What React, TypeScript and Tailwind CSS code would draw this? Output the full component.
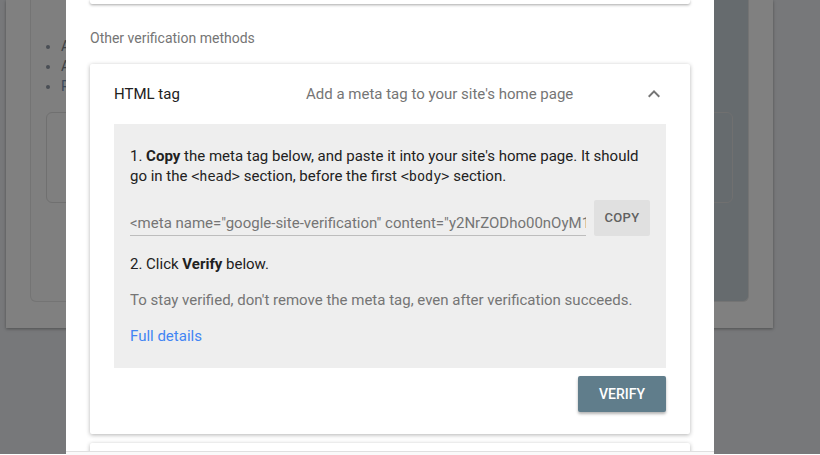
import React from 'react'

function ChevronUp() {
  return (
    <svg width="24" height="24" viewBox="0 0 24 24" className="text-[#757575]">
      <path d="M7.41 15.41 12 10.83l4.59 4.58L18 14l-6-6-6 6z" fill="currentColor" />
    </svg>
  )
}

function BackgroundPage() {
  return (
    <div className="h-full bg-[#77787a] pt-px -mt-px">
      <div className="ml-[6px] w-[767px] h-[328px] bg-[#808080] shadow-[0_1px_3px_rgba(0,0,0,0.35)] px-[24px] flow-root">
        <div className="h-[302px] rounded-b-[6px] border border-t-0 border-[#747474] bg-[linear-gradient(to_right,#7f7f7f_50%,#666b6e_50%)] pt-[36px] px-[15px]">
          <ul className="list-disc pl-[15px] text-[14px] leading-[20px] text-[#3e4246] marker:text-[#4a4f55]">
            <li>Add</li>
            <li>Add</li>
            <li className="text-[#3c4a5c]">Re</li>
          </ul>
          <div className="mt-[16px] h-[91px] rounded-[6px] border border-[#707070]" />
        </div>
      </div>
    </div>
  )
}

export default function App() {
  return (
    <div className="relative w-[820px] h-[455px] overflow-hidden font-['Roboto',sans-serif]">
      <BackgroundPage />

      {/* dialog */}
      <div className="absolute left-[66px] top-0 w-[648px] h-[455px] bg-white">
        <div className="px-[24px]">
          <div className="h-[4px] bg-white rounded-b-[2px] shadow-[0_1px_3px_rgba(0,0,0,0.35)]" />

          <div className="mt-[26px] text-[14px] leading-[16px] text-[#757575]">Other verification methods</div>

          <div className="mt-[18px] h-[370px] bg-white rounded-[2px] shadow-[0_1px_4px_rgba(0,0,0,0.3)] px-[24px]">
            <div className="flex items-center h-[60px]">
              <div className="w-[192px] text-[15px] text-[#212121]">HTML tag</div>
              <div className="flex-1 text-[15px] text-[#757575]">Add a meta tag to your site's home page</div>
              <div className="mr-[-12px] w-[48px] flex justify-center">
                <ChevronUp />
              </div>
            </div>

            <div className="bg-[#eeeeee] h-[244px] px-[16px] pt-[22px]">
              <p className="text-[15px] leading-[20px] text-[#212121]">
                1. <b className="font-bold">Copy</b> the meta tag below, and paste it into your site's home page. It should go in the{' '}
                <code className="font-['DejaVu_Sans_Mono',monospace] text-[13.5px]">&lt;head&gt;</code> section, before the first{' '}
                <code className="font-['DejaVu_Sans_Mono',monospace] text-[13.5px]">&lt;body&gt;</code> section.
              </p>

              <div className="mt-[14px] flex items-start">
                <div className="w-[456px] mt-[13px] border-b border-[#bdbdbd] pb-[2px] overflow-hidden whitespace-nowrap text-[15px] leading-[20px] text-[#757575]">
                  &lt;meta name="google-site-verification" content="y2NrZODho00nOyM1" /&gt;
                </div>
                <button className="ml-[8px] w-[56px] h-[36px] rounded-[2px] bg-[#e0e0e0] text-[13px] font-medium tracking-[0.3px] text-[#616161]">
                  COPY
                </button>
              </div>

              <p className="mt-[18px] text-[15px] leading-[20px] text-[#212121]">
                2. Click <b className="font-bold">Verify</b> below.
              </p>
              <p className="mt-[16px] text-[15px] leading-[20px] text-[#757575]">
                To stay verified, don't remove the meta tag, even after verification succeeds.
              </p>
              <a className="block mt-[16px] text-[15px] leading-[20px] text-[#4285f4]" href="#">
                Full details
              </a>
            </div>

            <div className="flex justify-end pt-[8px]">
              <button className="w-[88px] h-[36px] rounded-[2px] bg-[#607d8b] text-white text-[14px] font-medium shadow-[0_2px_3px_rgba(0,0,0,0.3)]">
                VERIFY
              </button>
            </div>
          </div>

          <div className="mt-[9px] h-[20px] bg-white rounded-[2px] shadow-[0_1px_4px_rgba(0,0,0,0.3)]" />
        </div>
        <div className="absolute left-0 right-0 top-[451px] h-[4px] border-t border-[#e0e0e0] bg-[#fafafa]" />
      </div>
    </div>
  )
}
